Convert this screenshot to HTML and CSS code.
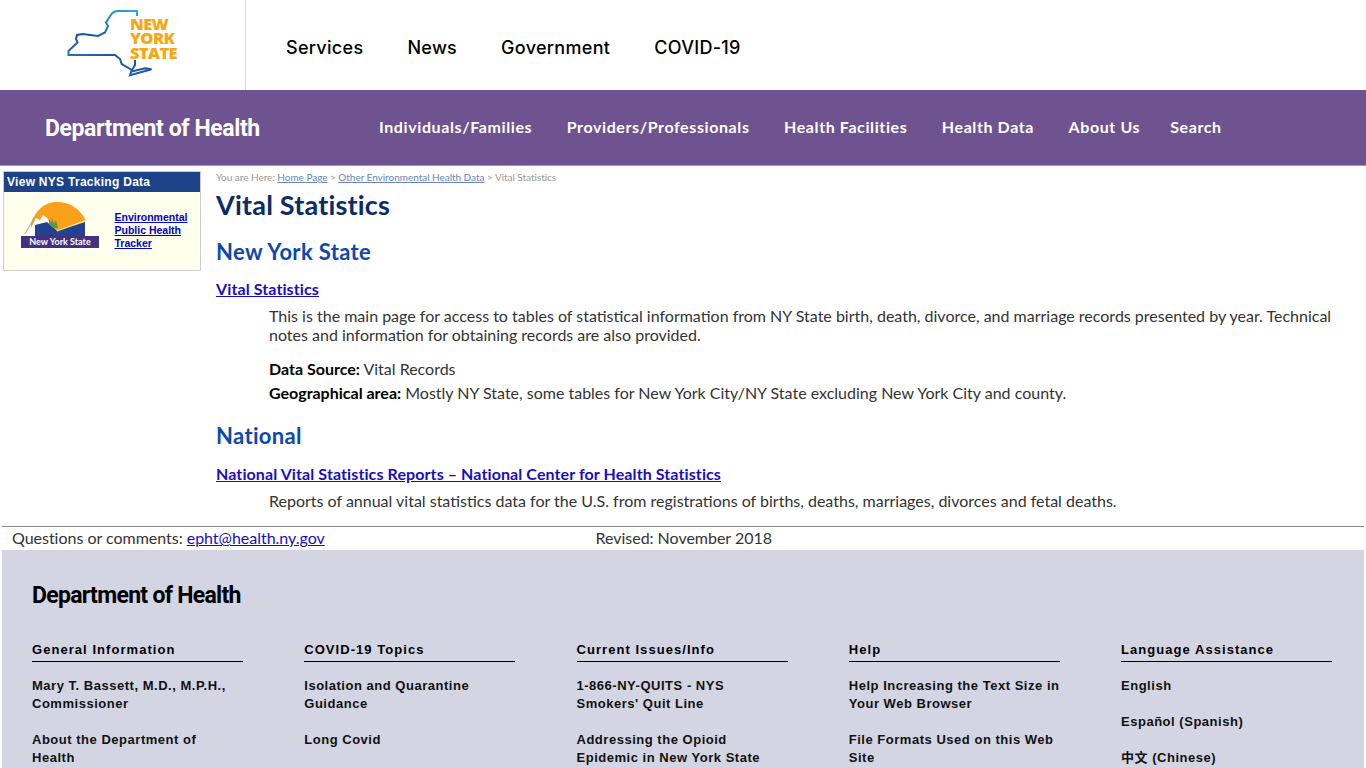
FILE: index.html
```html
<!DOCTYPE html>
<html lang="en">
<head>
    <meta charset="UTF-8">
    <title>Vital Statistics</title>
    <link rel="stylesheet" href="styles.css">
</head>
<body>
    <header class="top-bar">
        <div class="logo-cell">
            <a class="ny-logo" href="#">
                <svg class="ny-map" width="110" height="75" viewBox="60 5 110 75">
                    <defs>
                        <linearGradient id="mapStroke" gradientUnits="userSpaceOnUse" x1="130" y1="10" x2="100" y2="76">
                            <stop offset="0" stop-color="#25a9d8"/>
                            <stop offset="0.6" stop-color="#1d4f9f"/>
                            <stop offset="1" stop-color="#2b78bb"/>
                        </linearGradient>
                    </defs>
                    <path d="M137 16 V11 H118 C116 11 113 12 111.5 14 L106 22.5 L108 26 L105 32.5 L98 36 L90 35 L83 34 L77 35 L76 39 L77.5 42.5 L68.5 51 V55 H115 L120 59 L121.7 64 L131.7 70 L130 75.3 L151.5 69.3 L145 68.3 L131.7 71.5 M135 60 V65 L132 70" fill="none" stroke="url(#mapStroke)" stroke-width="2"/>
                </svg>
                <span class="ny-words">NEW<br>YORK<br>STATE</span>
            </a>
        </div>
        <nav class="top-nav">
            <a href="#">Services</a>
            <a href="#">News</a>
            <a href="#">Government</a>
            <a href="#">COVID-19</a>
        </nav>
    </header>

    <div class="agency-bar">
        <a class="agency-name" href="#">Department of Health</a>
        <nav class="agency-nav">
            <a href="#">Individuals/Families</a>
            <a href="#">Providers/Professionals</a>
            <a href="#">Health Facilities</a>
            <a href="#">Health Data</a>
            <a href="#">About Us</a>
            <a class="search-link" href="#">Search</a>
        </nav>
    </div>

    <div class="page-body">
        <aside class="tracker-box">
            <div class="tracker-title">View NYS Tracking Data</div>
            <div class="tracker-content">
                <div class="tracker-logo">
                    <svg width="78" height="34" viewBox="0 0 78 34">
                        <path d="M10 22 C14 8 24 0 36 0 C50 0 60 8 65 19 L36 30 L10 30 Z" fill="#f9a11b"/>
                        <path d="M8 30 L15 16 L19 18 L22 13 L26 16 L28 19 L32 26 L32 34 H8 Z" fill="#fff"/>
                        <path d="M14 34 V23 L26 20 L36 29 L64 20 V34 Z" fill="#23418f"/>
                        <path d="M28 17 L30 21 L31 16 L33 22 L35 18 L37 26 L33 26 L28 22 Z" fill="#4f9a45"/>
                        <path d="M36 29 L66 18" fill="none" stroke="#f5e9a8" stroke-width="1.3"/>
                        <path d="M4 32 L13 16" fill="none" stroke="#7fb4a0" stroke-width="1"/>
                    </svg>
                    <div class="tracker-badge">New York State</div>
                </div>
                <a class="tracker-link" href="#">Environmental Public Health Tracker</a>
            </div>
        </aside>

        <main class="main-col">
            <div class="crumbs">You are Here: <a href="#">Home Page</a> &gt; <a href="#">Other Environmental Health Data</a> &gt; Vital Statistics</div>
            <h1>Vital Statistics</h1>
            <h2>New York State</h2>
            <p class="entry-link"><a href="#">Vital Statistics</a></p>
            <div class="entry-text">
                <p class="entry-desc">This is the main page for access to tables of statistical information from NY State birth, death, divorce, and marriage records presented by year. Technical notes and information for obtaining records are also provided.</p>
                <p class="entry-meta"><b>Data Source:</b> Vital Records</p>
                <p class="entry-meta"><b>Geographical area:</b> Mostly NY State, some tables for New York City/NY State excluding New York City and county.</p>
            </div>
            <h2 class="national-head">National</h2>
            <p class="entry-link"><a href="#">National Vital Statistics Reports – National Center for Health Statistics</a></p>
            <div class="entry-text">
                <p class="entry-desc">Reports of annual vital statistics data for the U.S. from registrations of births, deaths, marriages, divorces and fetal deaths.</p>
            </div>
        </main>
    </div>

    <div class="contact-row">
        <div class="contact-left">Questions or comments: <a href="#">epht@health.ny.gov</a></div>
        <div>Revised: November 2018</div>
    </div>

    <footer class="site-footer">
        <div class="footer-name">Department of Health</div>
        <div class="footer-grid">
            <div class="footer-col">
                <h3>General Information</h3>
                <a href="#">Mary T. Bassett, M.D., M.P.H., Commissioner</a>
                <a href="#">About the Department of Health</a>
            </div>
            <div class="footer-col">
                <h3>COVID-19 Topics</h3>
                <a href="#">Isolation and Quarantine Guidance</a>
                <a href="#">Long Covid</a>
            </div>
            <div class="footer-col">
                <h3>Current Issues/Info</h3>
                <a href="#">1-866-NY-QUITS - NYS Smokers' Quit Line</a>
                <a href="#">Addressing the Opioid Epidemic in New York State</a>
            </div>
            <div class="footer-col">
                <h3>Help</h3>
                <a href="#">Help Increasing the Text Size in Your Web Browser</a>
                <a href="#">File Formats Used on this Web Site</a>
            </div>
            <div class="footer-col">
                <h3>Language Assistance</h3>
                <a href="#">English</a>
                <a href="#">Español (Spanish)</a>
                <a href="#">中文 (Chinese)</a>
            </div>
        </div>
    </footer>
</body>
</html>
```
FILE: styles.css
```css
* {
    margin: 0;
    padding: 0;
    box-sizing: border-box;
}

html, body {
    height: 768px;
    overflow: hidden;
}

body {
    font-family: 'Lato', 'Noto Sans', sans-serif;
    background: #fff;
    color: #222;
}

/* Top state bar */
.top-bar {
    display: flex;
    height: 90px;
}

.logo-cell {
    width: 246px;
    border-right: 1px solid #ddd;
    padding: 5px 0 0 60px;
}

.ny-logo {
    display: flex;
    position: relative;
    text-decoration: none;
}

.ny-words {
    position: absolute;
    left: 70px;
    top: 12px;
    font-family: 'Open Sans', sans-serif;
    font-weight: 800;
    font-size: 16.5px;
    line-height: 14.3px;
    letter-spacing: -0.6px;
    color: #f7a711;
}

.top-nav {
    display: flex;
    align-items: center;
    gap: 44px;
    padding: 4px 0 0 40px;
}

.top-nav a {
    font-family: 'Inter', sans-serif;
    font-size: 18px;
    font-weight: 500;
    letter-spacing: 0.3px;
    color: #000;
    text-decoration: none;
}

/* Agency bar */
.agency-bar {
    display: flex;
    align-items: center;
    height: 76px;
    background: #6f5290;
    border-bottom: 1px solid #a593b8;
    padding-left: 45px;
}

.agency-name {
    width: 334px;
    padding-top: 2px;
    font-family: 'Roboto', sans-serif;
    font-size: 23px;
    font-weight: 700;
    letter-spacing: -0.4px;
    color: #fff;
    text-decoration: none;
}

.agency-nav {
    display: flex;
    gap: 34.5px;
    margin-top: -2px;
}

.agency-nav a {
    font-size: 16px;
    font-weight: 700;
    letter-spacing: 0.6px;
    color: #fff;
    text-decoration: none;
}

.agency-nav .search-link {
    margin-left: -4.5px;
}

/* Main area */
.page-body {
    display: flex;
    height: 360px;
}

.tracker-box {
    width: 198px;
    height: 100px;
    margin: 5px 0 0 3px;
    background: #ffffee;
    border: 1px solid #ccc;
    flex-shrink: 0;
}

.tracker-title {
    background: #1d4287;
    color: #fff;
    font-family: 'Liberation Sans', sans-serif;
    font-size: 12px;
    font-weight: 700;
    letter-spacing: 0.28px;
    line-height: 20px;
    padding-left: 3px;
}

.tracker-content {
    display: flex;
    padding: 10px 0 0 17px;
}

.tracker-logo {
    width: 78px;
}

.tracker-logo svg {
    display: block;
}

.tracker-badge {
    background: #46307f;
    color: #fff;
    font-size: 9px;
    font-weight: 700;
    line-height: 12px;
    text-align: center;
}

.tracker-link {
    width: 80px;
    margin: 9px 0 0 15.5px;
    font-family: 'Liberation Sans', sans-serif;
    font-size: 10.5px;
    font-weight: 700;
    line-height: 13px;
    color: #0000cc;
}

.main-col {
    flex: 1;
    padding: 5px 20px 0 15px;
}

.crumbs {
    font-size: 10px;
    line-height: 12px;
    letter-spacing: -0.03px;
    color: #999;
}

.crumbs a {
    color: #6a86b8;
}

h1 {
    margin-top: 6px;
    font-size: 27px;
    line-height: 32px;
    font-weight: 700;
    letter-spacing: 0.2px;
    color: #0b2c66;
}

h2 {
    margin-top: 18px;
    font-size: 22px;
    line-height: 26px;
    font-weight: 700;
    letter-spacing: 0.35px;
    color: #0f48ac;
}

.national-head {
    margin-top: 21px;
    margin-bottom: 15px;
}

.entry-link {
    margin-top: 14px;
    font-size: 16px;
    line-height: 20px;
    font-weight: 700;
    letter-spacing: 0.1px;
}

.entry-link a {
    color: #1a0dc0;
}

.entry-text {
    padding-left: 53px;
    margin-bottom: 2px;
    font-size: 16px;
    line-height: 19px;
    color: #333;
}

.entry-desc {
    margin: 7px 0 15px;
}

.entry-meta {
    margin-bottom: 5px;
}

.entry-meta b {
    color: #000;
}

/* Contact row */
.contact-row {
    display: flex;
    margin: 0 2px;
    height: 24px;
    border-top: 1px solid #888;
    padding-left: 10px;
    font-size: 16px;
    line-height: 22px;
    letter-spacing: -0.02px;
    color: #333;
}

.contact-left {
    width: 583.5px;
}

.contact-row a {
    color: #1a0dc0;
}

/* Footer */
.site-footer {
    margin: 0 2px;
    background: #d3d5e3;
    padding: 31px 32px 0 30px;
}

.footer-name {
    font-family: 'Roboto', sans-serif;
    font-size: 23px;
    font-weight: 700;
    letter-spacing: -0.7px;
    line-height: 30px;
    color: #000;
}

.footer-grid {
    display: grid;
    grid-template-columns: repeat(5, 211px);
    justify-content: space-between;
    margin-top: 30px;
}

.footer-col h3 {
    font-family: 'Liberation Sans', sans-serif;
    font-size: 13px;
    font-weight: 700;
    letter-spacing: 1.05px;
    line-height: 18px;
    padding-bottom: 2px;
    border-bottom: 1px solid #000;
    margin-bottom: 15px;
    color: #000;
}

.footer-col a {
    display: block;
    font-family: 'Liberation Sans', 'Noto Sans CJK SC', sans-serif;
    font-size: 13px;
    font-weight: 700;
    letter-spacing: 0.52px;
    line-height: 18px;
    margin-bottom: 18px;
    color: #111;
    text-decoration: none;
}
```
